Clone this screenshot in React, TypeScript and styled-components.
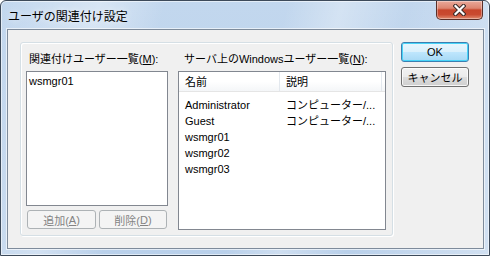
import React from 'react';
import styled, { createGlobalStyle, css } from 'styled-components';

const UI_FONT = `"Liberation Sans", "Noto Sans CJK JP", sans-serif`;

const GlobalStyle = createGlobalStyle`
    html, body {
        margin: 0;
        padding: 0;
        background: #ffffff;
    }
    body {
        font-family: ${UI_FONT};
        font-size: 11px;
        color: #000;
    }
`;

const associated = ['wsmgr01'];

const serverUsers = [
    { name: 'Administrator', desc: 'コンピューター/...' },
    { name: 'Guest', desc: 'コンピューター/...' },
    { name: 'wsmgr01', desc: '' },
    { name: 'wsmgr02', desc: '' },
    { name: 'wsmgr03', desc: '' },
];

const CloseGlyph = () => (
    <svg width="13" height="12" viewBox="0 0 13 12">
        <path d="M2.5 2 L10.5 10 M10.5 2 L2.5 10" stroke="#3b2a27" strokeWidth="4.2" strokeLinecap="square" />
        <path d="M2.5 2 L10.5 10 M10.5 2 L2.5 10" stroke="#ffffff" strokeWidth="2.2" strokeLinecap="square" />
    </svg>
);

const App: React.FC = () => {
    return (
        <>
            <GlobalStyle />
            <Frame>
                <TitleBar>
                    <TitleText>ユーザの関連付け設定</TitleText>
                    <CloseButton>
                        <CloseGlyph />
                    </CloseButton>
                </TitleBar>

                <Client>
                    <Panel>
                        <Column $width={142}>
                            <FieldLabel>
                                関連付けユーザー一覧(<Key>M</Key>):
                            </FieldLabel>
                            <ListBox>
                                {associated.map((u) => (
                                    <ListItem key={u}>{u}</ListItem>
                                ))}
                            </ListBox>
                            <ButtonRow>
                                <PushButton $variant="disabled" $width={69}>
                                    追加(<Key>A</Key>)
                                </PushButton>
                                <PushButton $variant="disabled" $width={68}>
                                    削除(<Key>D</Key>)
                                </PushButton>
                            </ButtonRow>
                        </Column>

                        <Column $width={208}>
                            <FieldLabel $indent={6}>
                                サーバ上のWindowsユーザー一覧(<Key>N</Key>):
                            </FieldLabel>
                            <ListView>
                                <HeaderRow>
                                    <HeaderCell $width={101}>名前</HeaderCell>
                                    <HeaderCell $width={102}>説明</HeaderCell>
                                </HeaderRow>
                                <Rows>
                                    {serverUsers.map((u) => (
                                        <Row key={u.name}>
                                            <Cell $width={101}>{u.name}</Cell>
                                            <Cell $width={102}>{u.desc}</Cell>
                                        </Row>
                                    ))}
                                </Rows>
                            </ListView>
                        </Column>
                    </Panel>

                    <SideButtons>
                        <PushButton $variant="primary" $width={68}>OK</PushButton>
                        <PushButton $width={68}>キャンセル</PushButton>
                    </SideButtons>
                </Client>
            </Frame>
        </>
    );
};

const Frame = styled.div`
    width: 490px;
    height: 256px;
    box-sizing: border-box;
    display: flex;
    flex-direction: column;
    border: 1px solid #3d4a5a;
    border-radius: 6px 6px 0 0;
    background:
        linear-gradient(104deg,
            rgba(255,255,255,0) 0%,
            rgba(255,255,255,0.35) 18%,
            rgba(255,255,255,0) 30%,
            rgba(255,255,255,0) 52%,
            rgba(255,255,255,0.3) 62%,
            rgba(255,255,255,0) 74%,
            rgba(255,255,255,0.35) 100%),
        linear-gradient(180deg, #c2d7ee 0%, #b9d0ea 100%);
    box-shadow: inset 0 0 0 1px rgba(255,255,255,0.55);
    overflow: hidden;
`;

const TitleBar = styled.div`
    height: 28px;
    flex: none;
    display: flex;
    align-items: flex-start;
`;

const TitleText = styled.div`
    padding: 7px 0 0 7px;
    font-family: "Noto Sans CJK JP", sans-serif;
    font-size: 12px;
    line-height: 16px;
    color: #000;
    text-shadow: 0 0 6px rgba(255,255,255,0.9);
`;

const CloseButton = styled.div`
    margin-left: auto;
    margin-right: 6px;
    width: 47px;
    height: 19px;
    box-sizing: border-box;
    border: 1px solid #5a2f28;
    border-top: none;
    border-radius: 0 0 5px 5px;
    background: linear-gradient(180deg, #e9a99a 0%, #dd8570 40%, #c7452b 50%, #c94a30 75%, #e08a6e 100%);
    box-shadow: inset 0 0 0 1px rgba(255,255,255,0.35);
    display: flex;
    align-items: center;
    justify-content: center;
`;

const Client = styled.div`
    flex: 1;
    margin: 0 5px 6px 6px;
    border: 1px solid #7e8b9b;
    box-shadow: 0 0 0 1px rgba(255,255,255,0.6);
    background: #f0f0f0;
    display: flex;
    align-items: flex-start;
    padding: 12px 14px 0 12px;
    gap: 8px;
`;

const Panel = styled.div`
    width: 373px;
    height: 194px;
    box-sizing: border-box;
    border: 1px solid #d5dfe5;
    border-radius: 3px;
    box-shadow: inset 1px 1px 0 #ffffff, 1px 1px 0 #ffffff;
    display: flex;
    gap: 10px;
    padding: 8px 6px 0 5px;
`;

const Column = styled.div<{ $width: number }>`
    width: ${(p) => p.$width}px;
    display: flex;
    flex-direction: column;
`;

const FieldLabel = styled.div<{ $indent?: number }>`
    height: 16px;
    line-height: 16px;
    margin-bottom: 4px;
    padding-left: ${(p) => p.$indent ?? 3}px;
    white-space: nowrap;
`;

const Key = styled.span`
    text-decoration: underline;
`;

const ListBox = styled.div`
    height: 135px;
    box-sizing: border-box;
    border: 1px solid #828790;
    background: #ffffff;
    padding: 2px 2px;
`;

const ListItem = styled.div`
    height: 14px;
    line-height: 14px;
`;

const ButtonRow = styled.div`
    display: flex;
    gap: 3px;
    margin-top: 4px;
    padding-left: 1px;
`;

const PushButton = styled.div<{ $variant?: 'primary' | 'disabled'; $width: number }>`
    width: ${(p) => p.$width}px;
    height: 20px;
    box-sizing: border-box;
    border: 1px solid #707070;
    border-radius: 3px;
    display: flex;
    align-items: center;
    justify-content: center;
    font-family: ${UI_FONT};
    font-size: 11px;
    color: #000;
    background: linear-gradient(180deg, #f2f2f2 0%, #ebebeb 50%, #dddddd 51%, #cfcfcf 100%);
    box-shadow: inset 0 0 0 1px rgba(255,255,255,0.8);

    ${(p) =>
        p.$variant === 'primary' &&
        css`
            border-color: #3c7fb1;
            background: linear-gradient(180deg, #eaf6fd 0%, #d9f0fc 50%, #bee6fd 51%, #a7d9f5 100%);
            box-shadow: inset 0 0 0 1px #48d4f8;
        `}

    ${(p) =>
        p.$variant === 'disabled' &&
        css`
            height: 19px;
            border-color: #adb2b5;
            background: #f4f4f4;
            color: #838383;
            box-shadow: none;
        `}
`;

const SideButtons = styled.div`
    display: flex;
    flex-direction: column;
    gap: 5px;
`;

const ListView = styled.div`
    height: 159px;
    box-sizing: border-box;
    border: 1px solid #828790;
    background: #ffffff;
`;

const HeaderRow = styled.div`
    display: flex;
    height: 20px;
    box-sizing: border-box;
    border-bottom: 1px solid #e5e5e5;
    background: linear-gradient(180deg, #ffffff 0%, #ffffff 50%, #f4f6f8 100%);
`;

const HeaderCell = styled.div<{ $width: number }>`
    width: ${(p) => p.$width}px;
    box-sizing: border-box;
    padding-left: 6px;
    line-height: 19px;
    border-right: 1px solid #e3e8ee;
    font-family: "Noto Sans CJK JP", sans-serif;
`;

const Rows = styled.div`
    padding-top: 5px;
`;

const Row = styled.div`
    display: flex;
    height: 16px;
    line-height: 16px;
`;

const Cell = styled.div<{ $width: number }>`
    width: ${(p) => p.$width}px;
    box-sizing: border-box;
    padding-left: 6px;
    white-space: nowrap;
    overflow: hidden;
`;

export default App;
